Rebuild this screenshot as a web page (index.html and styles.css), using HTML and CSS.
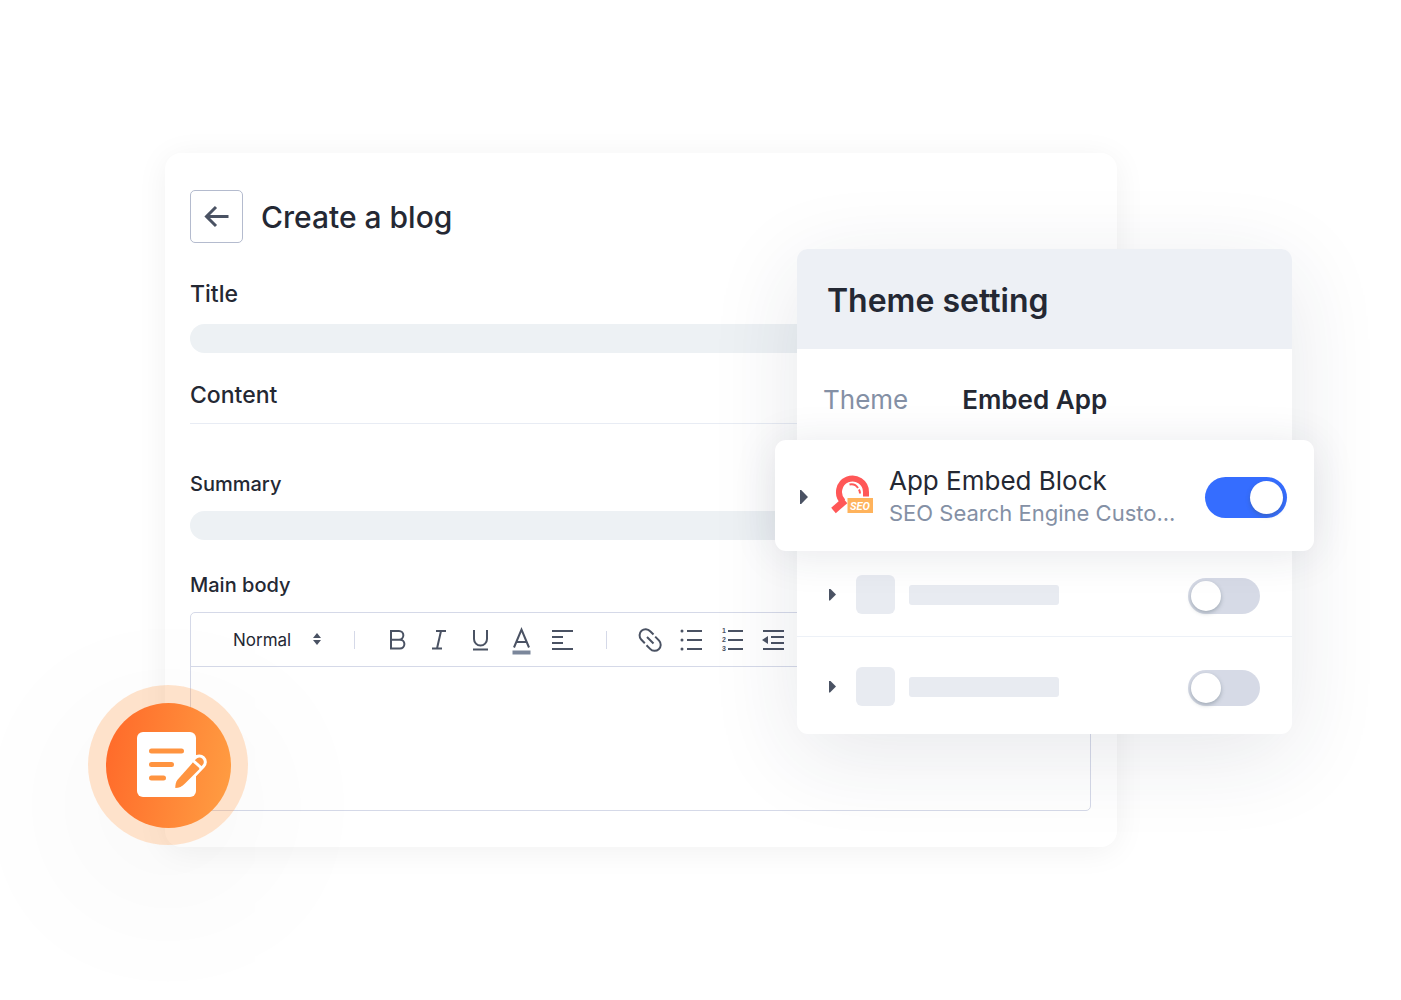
FILE: index.html
```html
<!DOCTYPE html>
<html lang="en">
  <head>
    <meta charset="UTF-8" />
    <meta name="viewport" content="width=device-width, initial-scale=1.0" />
    <title>Create a blog</title>
    <link rel="stylesheet" href="styles.css">
  </head>
  <body>
    <main class="stage">
      <form class="card">
        <header class="card-header">
          <button type="button" class="back" aria-label="Back">
            <svg width="26" height="24" viewBox="0 0 26 24"><path d="M24.500 11.500H2M12 2L2.500 11.500l9.500 9.500" /></svg>
          </button>
          <h1>Create a blog</h1>
        </header>

        <label class="label title-label" for="title">Title</label>
        <input class="field" type="text" id="title" />

        <h2 class="label content-label">Content</h2>

        <label class="label small summary-label" for="summary">Summary</label>
        <input class="field" type="text" id="summary" />

        <label class="label small body-label" for="body">Main body</label>
        <div class="editor">
          <div class="toolbar">
            <div class="format">
              <select aria-label="Text style">
                <option>Normal</option>
              </select>
              <svg width="8" height="12" viewBox="0 0 8 12"><path d="M4 0l4 5H0zM4 12L0 7h8z" /></svg>
            </div>
            <span class="separator"></span>
            <div class="tools">
              <button type="button" aria-label="Bold">
                <svg viewBox="0 0 24 24"><path d="M5 3h8a4.300 4.300 0 0 1 0 8.700H5zM5 11.700h9a4.400 4.400 0 0 1 0 8.800H5z" /></svg>
              </button>
              <button type="button" aria-label="Italic">
                <svg viewBox="0 0 24 24"><path d="M9 3h10M5 20.500h10M14 3l-4 17.500" /></svg>
              </button>
              <button type="button" aria-label="Underline">
                <svg viewBox="0 0 24 24"><path d="M6 2v9a6.500 6.500 0 0 0 13 0V2M5 21.500h15" /></svg>
              </button>
              <button type="button" aria-label="Text color">
                <svg viewBox="0 0 24 28"><path d="M5 19.500l7.500-18L20 19.500M8 14h9" /><path class="swatch" d="M3.500 24.500h18" /></svg>
              </button>
              <button type="button" aria-label="Align left">
                <svg viewBox="0 0 24 24"><path d="M2 3h21M2 9h11M2 15h11M2 21h21" /></svg>
              </button>
            </div>
            <span class="separator"></span>
            <div class="tools">
              <button type="button" aria-label="Link">
                <svg viewBox="0 0 24 24"><path d="M15.500 6.500l-3.300-3.300a6 6 0 0 0-9 8.300l3.600 3.700M8.500 17.300l3.600 3.600a6 6 0 0 0 9-8.300l-3.900-4M9 9l6.500 6.500" /></svg>
              </button>
              <button type="button" aria-label="Bulleted list">
                <svg viewBox="0 0 24 24"><path d="M8 3h15M8 12h15M8 21h15" /><g class="solid"><circle cx="3" cy="3" r="1.500" /><circle cx="3" cy="12" r="1.500" /><circle cx="3" cy="21" r="1.500" /></g></svg>
              </button>
              <button type="button" aria-label="Numbered list">
                <svg viewBox="0 0 24 24"><path d="M8 3h15M8 12h15M8 21h15" /><g class="numbers"><text x="2" y="5">1</text><text x="2" y="14">2</text><text x="2" y="23">3</text></g></svg>
              </button>
              <button type="button" aria-label="Decrease indent">
                <svg viewBox="0 0 24 24"><path d="M2 3h21M10 9h13M10 15h13M2 21h21" /><path class="solid" d="M1 12l6-4v8z" /></svg>
              </button>
            </div>
          </div>
          <textarea id="body"></textarea>
        </div>
      </form>

      <section class="panel">
        <h2 class="panel-header">Theme setting</h2>
        <nav class="tabs">
          <a href="#">Theme</a>
          <a href="#" class="active">Embed App</a>
        </nav>

        <div class="block">
          <button type="button" class="expand large" aria-label="Expand App Embed Block"></button>
          <svg class="seo-icon" width="44" height="42" viewBox="0 0 44 42">
            <path class="lens" d="M36 21.500V17A13.500 13.500 0 1 0 13 26.600" />
            <path class="handle" d="M15 25.500L3.500 35.500" />
            <path class="shine" d="M19.500 9.500a8 8 0 0 1 8.500 3.500M29 14.500a8 8 0 0 1 1 4" />
            <rect x="17.500" y="23" width="25.500" height="15" fill="#ffb35c" />
            <text x="20" y="34.500">SEO</text>
          </svg>
          <div class="block-text">
            <label for="embed">App Embed Block</label>
            <p>SEO Search Engine Custo...</p>
          </div>
          <input type="checkbox" class="toggle large" id="embed" checked />
        </div>

        <div class="row">
          <button type="button" class="expand" aria-label="Expand block"></button>
          <span class="thumb"></span>
          <span class="line"></span>
          <input type="checkbox" class="toggle" aria-label="Enable block" />
        </div>
        <div class="row">
          <button type="button" class="expand" aria-label="Expand block"></button>
          <span class="thumb"></span>
          <span class="line"></span>
          <input type="checkbox" class="toggle" aria-label="Enable block" />
        </div>
      </section>

      <div class="badge">
        <div class="badge-inner">
          <svg width="72" height="66" viewBox="0 0 72 66">
            <rect x="1" y="0" width="59" height="65" rx="6" fill="#fff" />
            <path class="note-line" d="M15.500 19h30M15.500 32.500h20M15.500 46h12" />
            <path class="pencil-edge" d="M48 46l15.300-16" />
            <path class="pencil-cap" d="M60 33.500l3.300-3.500" />
            <path class="pencil" d="M39.300 56c0-3 .4-6 2-8L56.500 31l7 6L49 51.500c-3 3-6 4.500-9.700 4.500z" />
            <path class="pencil-band" d="M57 28.500l9 8" />
          </svg>
        </div>
      </div>
    </main>
  </body>
</html>
```
FILE: styles.css
```css
* {
  box-sizing: border-box;
}

body {
  margin: 0;
  background: #fff;
  color: #242833;
  font-family: Inter, "Liberation Sans", sans-serif;
  overflow-x: hidden;
}

h1,
h2,
p {
  margin: 0;
}

button {
  padding: 0;
  border: none;
  background: none;
  cursor: pointer;
}

.stage {
  position: relative;
  margin: 153px 284px 153px 165px;
}

.card {
  padding: 37px 26px 36px 25px;
  border-radius: 16px;
  background: #fff;
  box-shadow: 0 4px 32px rgba(0, 0, 0, 0.06);
}

.card-header {
  display: flex;
  align-items: center;
  gap: 18px;
}

.card-header h1 {
  font-size: 30px;
  font-weight: 500;
}

.back {
  display: flex;
  align-items: center;
  justify-content: center;
  width: 53px;
  height: 53px;
  border: 1px solid #b4bbce;
  border-radius: 5px;
}

.back svg {
  fill: none;
  stroke: #4a5263;
  stroke-width: 3;
}

.label {
  display: block;
  font-size: 23px;
  font-weight: 500;
  line-height: 28px;
}

.small {
  font-size: 20px;
}

.title-label {
  margin: 37px 0 16px;
}

.content-label {
  margin-top: 28px;
  padding-bottom: 14px;
  border-bottom: 1px solid #e8ecf4;
}

.summary-label {
  margin: 46px 0 13px;
}

.body-label {
  margin: 31px 0 13px;
}

.field {
  display: block;
  width: 100%;
  height: 29px;
  padding: 0 16px;
  border: none;
  border-radius: 15px;
  background: #edf1f4;
}

.editor {
  border: 1px solid #d5d9e8;
  border-radius: 5px;
}

.toolbar {
  display: flex;
  align-items: center;
  height: 54px;
  padding-left: 42px;
  border-bottom: 1px solid #d5d9e8;
}

.format {
  position: relative;
  width: 89px;
}

.format select {
  width: 100%;
  padding: 0;
  border: none;
  background: none;
  color: #242833;
  font-family: inherit;
  font-size: 17px;
  appearance: none;
}

.format svg {
  position: absolute;
  top: 3px;
  right: 1px;
  fill: #4a5263;
  pointer-events: none;
}

.separator {
  width: 1px;
  height: 18px;
  margin: 0 31px 0 32px;
  background: #d5d9e8;
}

.tools {
  display: flex;
  gap: 17px;
}

.tools button {
  width: 24px;
  height: 24px;
}

.tools svg {
  display: block;
  width: 24px;
  overflow: visible;
  fill: none;
  stroke: #4a5263;
  stroke-width: 2;
}

.tools .swatch {
  stroke: #7b879b;
  stroke-width: 4;
}

.tools .solid {
  fill: #4a5263;
  stroke: none;
}

.tools .numbers {
  fill: #4a5263;
  stroke: none;
  font-size: 7px;
  font-weight: 700;
}

.editor textarea {
  display: block;
  width: 100%;
  height: 143px;
  padding: 16px;
  border: none;
  background: none;
  resize: none;
}

.panel {
  position: absolute;
  top: 96px;
  right: -175px;
  width: 52%;
  padding-bottom: 6px;
  border-radius: 11px;
  background: #fff;
  box-shadow: 0 20px 90px rgba(35, 45, 75, 0.11);
}

.panel-header {
  height: 100px;
  padding: 2px 30px 0;
  border-radius: 11px 11px 0 0;
  background: #edf0f5;
  font-size: 32px;
  font-weight: 600;
  line-height: 100px;
}

.tabs {
  display: flex;
  gap: 54px;
  height: 91px;
  padding: 5px 26px 0;
  font-size: 26px;
  line-height: 91px;
}

.tabs a {
  color: #8490a5;
  text-decoration: none;
}

.tabs .active {
  color: #242833;
  font-weight: 600;
}

.block {
  position: relative;
  display: flex;
  align-items: center;
  height: 111px;
  margin: 0 -22px -6px;
  padding: 3px 27px 0 25px;
  border-radius: 11px;
  background: #fff;
  box-shadow: 0 4px 44px rgba(35, 45, 75, 0.11);
}

.block-text {
  flex: 1;
  font-size: 26px;
  line-height: 33px;
  white-space: nowrap;
}

.block-text label {
  display: block;
}

.block-text p {
  color: #8490a5;
  font-size: 22px;
}

.seo-icon {
  margin: 0 15px 3px 22px;
  fill: none;
}

.seo-icon .lens {
  stroke: #ff5757;
  stroke-width: 6;
}

.seo-icon .handle {
  stroke: #ff5757;
  stroke-width: 7;
}

.seo-icon .shine {
  stroke: #ff5757;
  stroke-width: 2;
}

.seo-icon text {
  fill: #fff;
  font-family: Roboto, sans-serif;
  font-size: 11px;
  font-style: italic;
  font-weight: 700;
}

.expand {
  width: 7px;
  height: 12px;
  background: #4a5263;
  clip-path: polygon(0 0, 15% 0, 100% 50%, 15% 100%, 0 100%);
}

.expand.large {
  width: 8px;
  height: 14px;
}

.row {
  display: flex;
  align-items: center;
  padding: 30px 32px 22px;
}

.row + .row {
  border-top: 1px solid #edf1f7;
}

.thumb {
  width: 39px;
  height: 39px;
  margin: 0 14px 0 20px;
  border-radius: 6px;
  background: #e8ebf1;
}

.line {
  width: 150px;
  height: 20px;
  border-radius: 3px;
  background: #e8ebf1;
}

.toggle {
  flex: none;
  width: 72px;
  height: 36px;
  margin: 2px 0 0 auto;
  padding: 3px;
  border-radius: 21px;
  background: #d6dae6;
  appearance: none;
  cursor: pointer;
}

.toggle::before {
  content: "";
  display: block;
  width: 30px;
  height: 30px;
  border-radius: 50%;
  background: #fff;
  box-shadow: 0 2px 4px rgba(60, 80, 90, 0.35);
}

.toggle.large {
  width: 82px;
  height: 41px;
  margin-top: 0;
  padding: 4px;
}

.toggle.large::before {
  width: 33px;
  height: 33px;
}

.toggle:checked {
  background: #356dff;
}

.toggle:checked::before {
  margin-left: auto;
}

.badge {
  position: absolute;
  bottom: 2px;
  left: -77px;
  display: flex;
  align-items: center;
  justify-content: center;
  width: 160px;
  height: 160px;
  border-radius: 50%;
  background: rgba(250, 150, 70, 0.28);
  box-shadow: 0 40px 180px rgba(0, 0, 0, 0.06);
}

.badge-inner {
  display: flex;
  align-items: center;
  justify-content: center;
  width: 125px;
  height: 125px;
  padding-left: 8px;
  border-radius: 50%;
  background: linear-gradient(100deg, #ff6829, #ff9f43);
}

.badge-inner svg {
  fill: none;
}

.note-line {
  stroke: #ff9440;
  stroke-width: 5;
  stroke-linecap: round;
}

.pencil-edge {
  stroke: #fff;
  stroke-width: 15;
  stroke-linecap: round;
}

.pencil-cap {
  stroke: #ff9440;
  stroke-width: 9;
  stroke-linecap: round;
}

.pencil {
  fill: #ff9440;
}

.pencil-band {
  stroke: #fff;
  stroke-width: 3;
}
```
